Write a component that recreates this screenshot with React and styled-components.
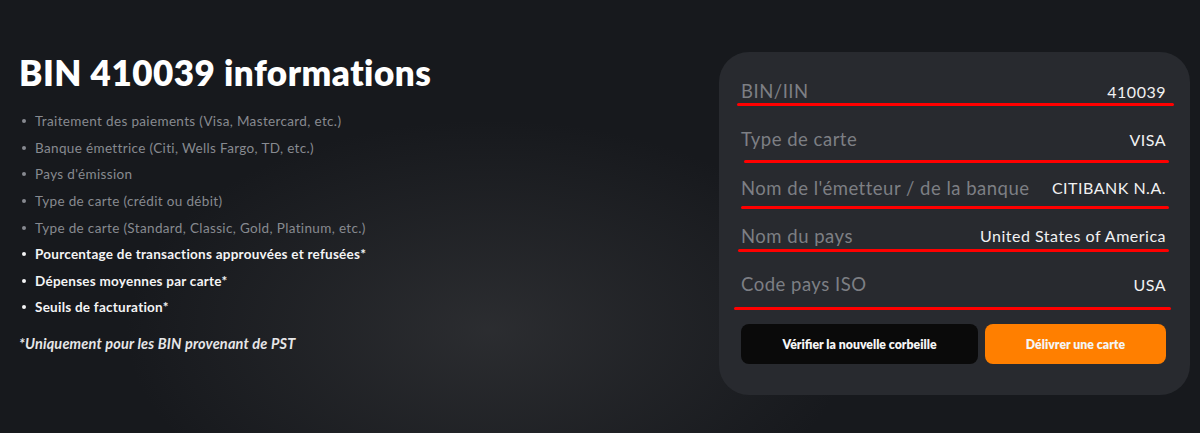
import React from 'react';
import styled, { createGlobalStyle } from 'styled-components';

const GlobalStyle = createGlobalStyle`
  html, body {
    margin: 0;
    padding: 0;
    background: #17191d;
  }
  * {
    box-sizing: border-box;
  }
`;

const Page = styled.div`
  width: 1200px;
  height: 433px;
  overflow: hidden;
  display: flex;
  justify-content: space-between;
  align-items: flex-start;
  padding: 52px 10px 0 19px;
  background:
    radial-gradient(ellipse 520px 300px at 490px 330px, rgba(60, 61, 64, 0.55), rgba(23, 25, 29, 0) 70%),
    #17191d;
  font-family: 'Lato', 'Liberation Sans', sans-serif;
`;

const Info = styled.div`
  display: flex;
  flex-direction: column;
`;

const Title = styled.h1`
  margin: 0 0 16px 0;
  font-size: 35px;
  line-height: 40px;
  font-weight: 800;
  color: #ffffff;
  letter-spacing: 0.5px;
`;

const List = styled.ul`
  list-style: none;
  margin: 0;
  padding: 0;
  display: flex;
  flex-direction: column;
`;

const Item = styled.li`
  display: flex;
  align-items: center;
  height: 26.6px;
  font-size: 13.5px;
  letter-spacing: ${p => (p.$strong ? '0.25px' : '0.35px')};
  font-weight: ${p => (p.$strong ? 700 : 400)};
  color: ${p => (p.$strong ? '#f4f4f5' : '#878a90')};

  &::before {
    content: '';
    width: 4px;
    height: 4px;
    border-radius: 50%;
    background: currentColor;
    margin: 0 9px 0 3px;
    flex-shrink: 0;
  }
`;

const Note = styled.p`
  margin: 14px 0 0 0;
  font-size: 14.5px;
  font-style: italic;
  font-weight: 700;
  letter-spacing: 0.17px;
  color: #e6e6e8;
`;

const Card = styled.div`
  width: 471px;
  height: 343px;
  background: #282a2f;
  border-radius: 30px;
  padding: 28px 22px 0 22px;
  display: flex;
  flex-direction: column;
`;

const Row = styled.div`
  display: flex;
  flex-direction: column;
  height: 48.3px;
`;

const Line = styled.div`
  display: flex;
  justify-content: space-between;
  align-items: center;
  height: 22px;
  padding-right: 2px;
`;

const Label = styled.span`
  font-size: 18.5px;
  color: #7d7f84;
  letter-spacing: 0.5px;
`;

const Value = styled.span`
  font-size: 16px;
  font-weight: 400;
  letter-spacing: 0.5px;
  color: #f1f1f2;
`;

const Underline = styled.div`
  height: 3px;
  border-radius: 2px;
  background: #ff0000;
  margin-top: ${p => p.$top}px;
  margin-left: ${p => p.$left}px;
  margin-right: ${p => p.$right}px;
`;

const Actions = styled.div`
  display: flex;
  gap: 7px;
  margin-top: 3px;
  padding-right: 2px;
`;

const Button = styled.button`
  height: 40px;
  border: none;
  border-radius: 8px;
  font-family: 'Lato', 'Liberation Sans', sans-serif;
  font-size: 12.3px;
  font-weight: 800;
  color: #f5f5f5;
  cursor: pointer;
  background: ${p => (p.$primary ? '#ff7f00' : '#0a0a0a')};
  width: ${p => (p.$primary ? '181px' : '237px')};
`;

const features = [
  { text: 'Traitement des paiements (Visa, Mastercard, etc.)' },
  { text: 'Banque émettrice (Citi, Wells Fargo, TD, etc.)' },
  { text: "Pays d'émission" },
  { text: 'Type de carte (crédit ou débit)' },
  { text: 'Type de carte (Standard, Classic, Gold, Platinum, etc.)' },
  { text: 'Pourcentage de transactions approuvées et refusées*', strong: true },
  { text: 'Dépenses moyennes par carte*', strong: true },
  { text: 'Seuils de facturation*', strong: true },
];

const details = [
  { label: 'BIN/IIN', value: '410039', line: { top: 1, left: -4, right: -6 } },
  { label: 'Type de carte', value: 'VISA', line: { top: 10, left: 3, right: -1 } },
  { label: "Nom de l'émetteur / de la banque", value: 'CITIBANK N.A.', line: { top: 7, left: 0, right: -1 } },
  { label: 'Nom du pays', value: 'United States of America', line: { top: 2, left: -3, right: -1 } },
  { label: 'Code pays ISO', value: 'USA', line: { top: 12, left: -7, right: -3 } },
];

const App = () => {
  return (
    <>
      <GlobalStyle />
      <Page>
        <Info>
          <Title>BIN 410039 informations</Title>
          <List>
            {features.map(f => (
              <Item key={f.text} $strong={f.strong}>{f.text}</Item>
            ))}
          </List>
          <Note>*Uniquement pour les BIN provenant de PST</Note>
        </Info>
        <Card>
          {details.map(d => (
            <Row key={d.label}>
              <Line>
                <Label>{d.label}</Label>
                <Value>{d.value}</Value>
              </Line>
              <Underline $top={d.line.top} $left={d.line.left} $right={d.line.right} />
            </Row>
          ))}
          <Actions>
            <Button>Vérifier la nouvelle corbeille</Button>
            <Button $primary>Délivrer une carte</Button>
          </Actions>
        </Card>
      </Page>
    </>
  );
};

export default App;
